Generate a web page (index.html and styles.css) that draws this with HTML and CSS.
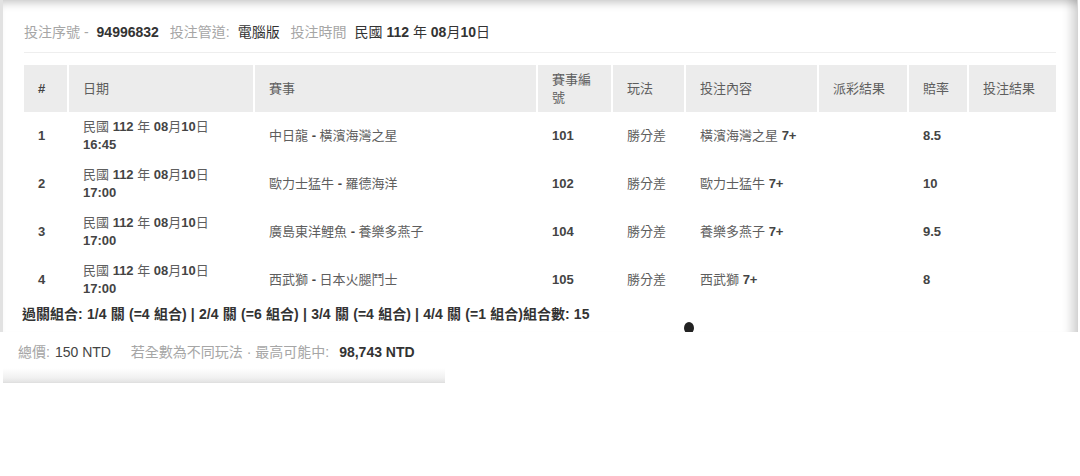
FILE: index.html
```html
<!DOCTYPE html>
<html lang="zh-Hant">
<head>
<meta charset="utf-8">
<title>投注明細</title>
<link rel="stylesheet" href="styles.css">
</head>
<body>
<div class="sheet">
  <div class="meta">
    <span class="lbl">投注序號 -</span><b class="val sp">94996832</b>
    <span class="lbl gap">投注管道:</span><span class="val sp">電腦版</span>
    <span class="lbl gap">投注時間</span><span class="val sp">民國 <b>112</b> 年 <b>08</b>月<b>10</b>日</span>
  </div>
  <div class="rule"></div>
  <table class="bets">
    <colgroup>
      <col style="width:44px"><col style="width:186px"><col style="width:283px"><col style="width:75px"><col style="width:73px"><col style="width:133px"><col style="width:90px"><col style="width:60px"><col style="width:88px">
    </colgroup>
    <thead>
      <tr><th class="c-no">#</th><th>日期</th><th>賽事</th><th>賽事編號</th><th>玩法</th><th>投注內容</th><th>派彩結果</th><th>賠率</th><th>投注結果</th></tr>
    </thead>
    <tbody>
      <tr><td class="c-no"><b>1</b></td><td>民國 <b>112</b> 年 <b>08</b>月<b>10</b>日<br><b>16:45</b></td><td>中日龍 <b>-</b> 橫濱海灣之星</td><td><b>101</b></td><td>勝分差</td><td>橫濱海灣之星 <b>7+</b></td><td></td><td><b>8.5</b></td><td></td></tr>
      <tr><td class="c-no"><b>2</b></td><td>民國 <b>112</b> 年 <b>08</b>月<b>10</b>日<br><b>17:00</b></td><td>歐力士猛牛 <b>-</b> 羅德海洋</td><td><b>102</b></td><td>勝分差</td><td>歐力士猛牛 <b>7+</b></td><td></td><td><b>10</b></td><td></td></tr>
      <tr><td class="c-no"><b>3</b></td><td>民國 <b>112</b> 年 <b>08</b>月<b>10</b>日<br><b>17:00</b></td><td>廣島東洋鯉魚 <b>-</b> 養樂多燕子</td><td><b>104</b></td><td>勝分差</td><td>養樂多燕子 <b>7+</b></td><td></td><td><b>9.5</b></td><td></td></tr>
      <tr><td class="c-no"><b>4</b></td><td>民國 <b>112</b> 年 <b>08</b>月<b>10</b>日<br><b>17:00</b></td><td>西武獅 <b>-</b> 日本火腿鬥士</td><td><b>105</b></td><td>勝分差</td><td>西武獅 <b>7+</b></td><td></td><td><b>8</b></td><td></td></tr>
    </tbody>
  </table>
  <div class="combo">過關組合: 1/4 關 (=4 組合) | 2/4 關 (=6 組合) | 3/4 關 (=4 組合) | 4/4 關 (=1 組合)組合數: 15</div>
  <span class="dot"></span>
</div>
<div class="total">
  <span class="lbl">總價:</span><span class="dark sp2">150 NTD</span>
  <span class="lbl gap2">若全數為不同玩法 · 最高可能中:</span><b class="val sp3">98,743 NTD</b>
</div>
</body>
</html>
```
FILE: styles.css
```css
html, body {
  margin: 0;
  padding: 0;
  background: #fff;
}
body {
  width: 1080px;
  height: 476px;
  overflow: hidden;
  font-family: "Liberation Sans", Arial, "Noto Sans CJK TC", sans-serif;
  color: #555;
}
.sheet {
  position: relative;
  box-sizing: border-box;
  width: 1078px;
  height: 332px;
  padding: 22px 0 8px 21px;
  border-left: 3px solid #e2e2e2;
  border-right: 1px solid #d4d4d4;
  background: #fff;
  box-shadow: inset 0 9px 8px -6px rgba(0, 0, 0, 0.22), inset -14px 0 10px -8px rgba(0, 0, 0, 0.16);
  overflow: hidden;
}
.meta {
  font-size: 14px;
  line-height: 20px;
  color: #333;
  white-space: nowrap;
}
.lbl {
  color: #a6a6a6;
}
.val {
  color: #333;
}
.val b, b.val {
  font-weight: bold;
}
.sp {
  margin-left: 8px;
}
.gap {
  margin-left: 7px;
}
.rule {
  width: 1032px;
  margin-top: 10px;
  height: 1px;
  background: #eeeeee;
}
.bets {
  margin-top: 12px;
  width: 1032px;
  table-layout: fixed;
  border-collapse: collapse;
  font-size: 13px;
}
.bets th {
  height: 47px;
  padding: 0 14px;
  background: #ececec;
  border-left: 2px solid #fff;
  text-align: left;
  font-weight: normal;
  color: #5e5e5e;
  line-height: 18px;
  vertical-align: middle;
}
.bets th:first-child {
  border-left: 0;
}
.bets th.c-no {
  font-weight: bold;
  color: #444;
}
.bets th.c-no, .bets td.c-no {
  padding-left: 14px;
}
.bets td {
  height: 48px;
  padding: 0 14px;
  line-height: 18px;
  vertical-align: middle;
  color: #5e5e5e;
  border-left: 2px solid transparent;
}
.bets td:first-child {
  border-left: 0;
}
.bets td b {
  color: #444;
  font-weight: bold;
}
.combo {
  margin-left: -2px;
  font-size: 14px;
  line-height: 20px;
  color: #333;
  font-weight: bold;
  white-space: nowrap;
  word-spacing: 0.4px;
}
.dot {
  position: absolute;
  left: 681px;
  top: 322px;
  width: 10px;
  height: 12px;
  border-radius: 50%;
  background: #222;
}
.total {
  box-sizing: border-box;
  width: 442px;
  height: 51px;
  margin-left: 3px;
  padding-left: 15px;
  font-size: 14px;
  line-height: 40px;
  white-space: nowrap;
  background: linear-gradient(to bottom, #fff 0%, #fff 72%, #f0f0f0 92%, #e4e4e4 100%);
  border-bottom: 1px solid #e0e0e0;
}
.total .dark {
  color: #444;
}
.sp2 {
  margin-left: 5px;
}
.sp3 {
  margin-left: 10px;
}
.gap2 {
  margin-left: 16px;
}
```
